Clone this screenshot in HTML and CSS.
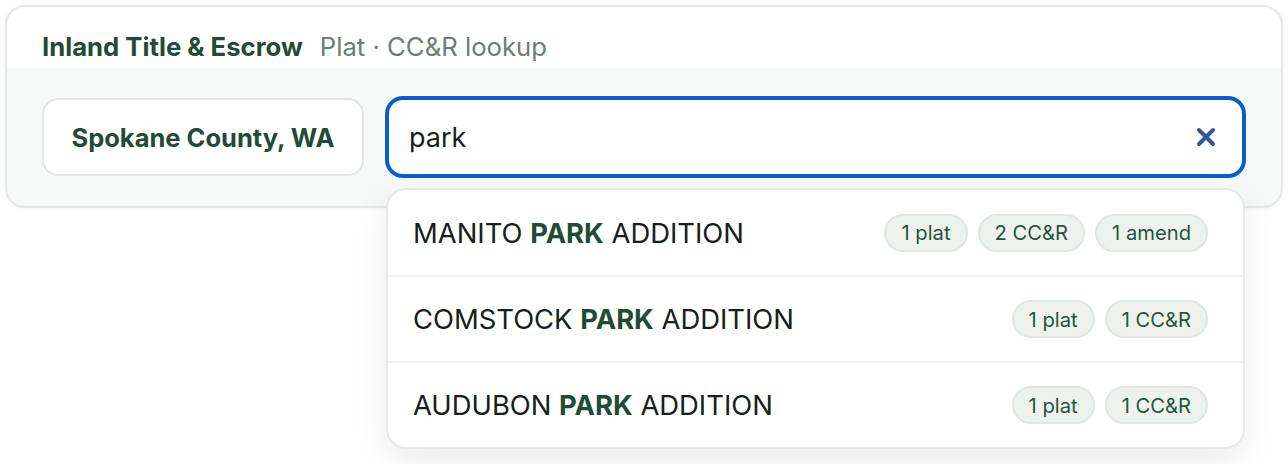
FILE: index.html
```html
<!DOCTYPE html>
<html lang="en">

<head>
    <meta charset="UTF-8">
    <title>Plat · CC&amp;R lookup</title>
    <link rel="stylesheet" href="styles.css">
</head>

<body>
    <div class="panel">
        <div class="panel-head">
            <span class="brand">Inland Title &amp; Escrow</span>
            <span class="sub">Plat · CC&amp;R lookup</span>
        </div>

        <div class="panel-body">
            <button class="county">Spokane County, WA</button>

            <div class="search-wrap">
                <div class="search">
                    <input type="text" class="search-input" value="park">
                    <button class="clear" aria-label="Clear">
                        <svg viewBox="0 0 20 20" width="20" height="20">
                            <path d="M3 3 L17 17 M17 3 L3 17" stroke="currentColor" stroke-width="4" stroke-linecap="round" fill="none"/>
                        </svg>
                    </button>
                </div>

                <ul class="results">
                    <li class="result">
                        <span class="name">MANITO <b>PARK</b> ADDITION</span>
                        <span class="chips">
                            <span class="chip">1 plat</span>
                            <span class="chip">2 CC&amp;R</span>
                            <span class="chip">1 amend</span>
                        </span>
                    </li>
                    <li class="result">
                        <span class="name">COMSTOCK <b>PARK</b> ADDITION</span>
                        <span class="chips">
                            <span class="chip">1 plat</span>
                            <span class="chip">1 CC&amp;R</span>
                        </span>
                    </li>
                    <li class="result">
                        <span class="name">AUDUBON <b>PARK</b> ADDITION</span>
                        <span class="chips">
                            <span class="chip">1 plat</span>
                            <span class="chip">1 CC&amp;R</span>
                        </span>
                    </li>
                </ul>
            </div>
        </div>
    </div>
</body>

</html>
```

FILE: styles.css
```css
html, body {
    height: 100%;
}

body {
    margin: 0;
    padding: 5px;
    box-sizing: border-box;
    font-family: Inter, "Noto Sans", sans-serif;
    background-color: #fff;
    color: #16201b;
}

.panel {
    border: 2px solid #e3e8e5;
    border-radius: 20px;
    background-color: #f7f9f8;
    box-shadow: 0 2px 4px rgba(0, 0, 0, 0.03);
}

.panel-head {
    display: flex;
    align-items: baseline;
    gap: 17px;
    height: 61px;
    box-sizing: border-box;
    padding: 24px 35px 0;
    background-color: #fff;
    border-radius: 18px 18px 0 0;
}

.brand {
    font-size: 25.7px;
    font-weight: 700;
    color: #1f4b37;
}

.sub {
    font-size: 25.7px;
    color: #6d7d75;
}

.panel-body {
    display: flex;
    align-items: center;
    gap: 21px;
    padding: 28px 35px 28px;
}

.county {
    width: 322px;
    height: 78px;
    flex: none;
    border: 2px solid #e2e7e4;
    border-radius: 16px;
    background-color: #fff;
    font-family: inherit;
    font-size: 25.5px;
    font-weight: 700;
    color: #1f4b37;
    cursor: pointer;
}

.search-wrap {
    flex: 1;
    position: relative;
}

.search {
    display: flex;
    align-items: center;
    height: 82px;
    box-sizing: border-box;
    border: 4px solid #0a5ecb;
    border-radius: 18px;
    background-color: #fff;
    padding: 0 26px 0 20px;
}

.search-input {
    flex: 1;
    border: none;
    outline: none;
    font-family: inherit;
    font-size: 27px;
    color: #16201b;
    padding: 0;
    background: transparent;
}

.clear {
    border: none;
    background: none;
    padding: 0;
    color: #33579a;
    display: flex;
    cursor: pointer;
}

.results {
    position: absolute;
    top: 92px;
    left: 1px;
    right: 1px;
    margin: 0;
    padding: 0;
    list-style: none;
    background-color: #fff;
    border: 2px solid #e5e9e7;
    border-radius: 20px;
    box-shadow: 0 12px 36px rgba(0, 0, 0, 0.08);
    z-index: 2;
}

.result {
    display: flex;
    align-items: center;
    justify-content: space-between;
    height: 84px;
    padding: 0 35px 0 25px;
    border-top: 2px solid #eef1ef;
}

.result:first-child {
    border-top: none;
    height: 85px;
}

.name {
    font-size: 27.4px;
}

.name b {
    color: #1f4b37;
}

.chips {
    display: flex;
    gap: 10px;
}

.chip {
    height: 38px;
    box-sizing: border-box;
    padding: 0 15px;
    display: flex;
    align-items: center;
    border: 2px solid #e0e7e2;
    border-radius: 19px;
    background-color: #edf2ee;
    font-size: 20.2px;
    color: #27543f;
}
```
